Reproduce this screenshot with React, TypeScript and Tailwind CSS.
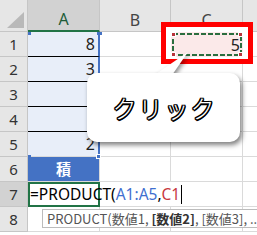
const jp = "font-['Noto_Sans','Noto_Sans_CJK_JP',sans-serif]";

function RowHead({ n, active }: { n: number; active?: boolean }) {
  return (
    <div
      className={`flex items-center justify-center border-r border-b border-[#c6c6c6] text-[15px] text-[#333] ${
        active ? "bg-[#d2d2d2]" : "bg-[#e6e6e6]"
      }`}
    >
      {n}
    </div>
  );
}

function Cell({ className = "", children }: { className?: string; children?: React.ReactNode }) {
  return <div className={`flex items-center justify-end pr-[3px] text-[16px] ${className}`}>{children}</div>;
}

const g = "border-r border-b border-[#dadada]";

export default function App() {
  const rows = [1, 2, 3, 4, 5];
  const values: Record<number, string> = { 1: "8", 2: "3", 5: "2" };

  return (
    <div className={`relative h-[235px] w-[257px] overflow-hidden bg-white text-[#222] ${jp}`}>
      <div className="grid grid-cols-[28px_72px_71px_72px_1fr] grid-rows-[32px_repeat(8,25px)]">
        {/* header */}
        <div className="relative border-r border-b border-[#c6c6c6] bg-[#e6e6e6]">
          <svg className="absolute left-0 top-0" width="28" height="32">
            <polygon points="24,12 24,28 7,28" fill="#b9b9b9" />
          </svg>
        </div>
        <div className="flex items-center justify-center border-r border-b-2 border-r-[#c6c6c6] border-b-[#217346] bg-[#d2d2d2] pt-[8px] text-[16px] text-[#1d5c38]">
          A
        </div>
        <div className="flex items-center justify-center border-r border-b border-[#c6c6c6] bg-[#e6e6e6] pt-[8px] text-[16px] text-[#444]">
          B
        </div>
        <div className="flex items-center justify-center border-r border-b border-[#c6c6c6] bg-[#e6e6e6] pt-[8px] text-[16px] text-[#444]">
          C
        </div>
        <div className="border-b border-[#c6c6c6] bg-[#e6e6e6]" />

        {rows.map((r) => (
          <div key={r} className="contents">
            <RowHead n={r} />
            <Cell
              className={`border-r-2 border-r-[#4472c4] bg-[#e8eef9] ${
                r < 5 ? "border-b border-b-black" : "border-b border-b-[#dadada]"
              }`}
            >
              {values[r]}
            </Cell>
            <div className={g} />
            <div className={g} />
            <div className="border-b border-[#dadada]" />
          </div>
        ))}

        {/* row 6 */}
        <RowHead n={6} />
        <div className="flex items-center justify-center border-r border-b border-[#dadada] bg-[#4472c4] font-['Noto_Sans_CJK_JP',sans-serif] text-[15px] font-bold text-white">
          積
        </div>
        <div className={g} />
        <div className={g} />
        <div className="border-b border-[#dadada]" />

        {/* row 7 */}
        <RowHead n={7} active />
        <div className="border-2 border-[#217346]" />
        <div className="border-b border-[#dadada]" />
        <div className={g} />
        <div className="border-b border-[#dadada]" />

        {/* row 8 */}
        <RowHead n={8} />
        <div className={g} />
        <div className={g} />
        <div className={g} />
        <div className="border-b border-[#dadada]" />
      </div>

      {/* range handles A1:A5 */}
      <div className="absolute left-[28px] top-[32px] h-[3px] w-[3px] bg-[#4472c4]" />
      <div className="absolute left-[97px] top-[32px] h-[3px] w-[5px] bg-[#4472c4]" />
      <div className="absolute left-[28px] top-[155px] h-[3px] w-[3px] bg-[#4472c4]" />
      <div className="absolute left-[96px] top-[154px] h-[5px] w-[5px] border border-white bg-[#4472c4]" />

      {/* formula being edited */}
      <div className="absolute left-[30px] top-[182px] flex h-[25px] items-center whitespace-nowrap font-['Noto_Sans',sans-serif] text-[15.5px] leading-none">
        <span className="text-black">=PRODUCT(</span>
        <span className="text-[#3f6fd0]">A1:A5</span>
        <span className="text-black">,</span>
        <span className="text-[#c8393f]">C1</span>
        <span className="ml-[1px] h-[19px] w-[1px] bg-black" />
      </div>

      {/* argument tooltip */}
      <div className="absolute left-[42px] top-[209px] flex h-[19px] items-center whitespace-pre border border-[#bcbcbc] bg-white pl-[4px] pr-[8px] font-['Noto_Sans_CJK_JP',sans-serif] text-[13px] leading-none text-[#555]">
        {"PRODUCT(数値1, "}
        <span className="font-bold text-[#333]">[数値2]</span>
        {", [数値3], ..."}
      </div>

      {/* red annotation box around C1 */}
      <div className="absolute left-[161px] top-[22px] h-[42px] w-[92px] border-[5px] border-[#ff0000] bg-white">
        <div className="relative ml-[5px] mt-[5px] flex h-[25px] w-[72px] items-center justify-end bg-[#fbe9e9] pr-[3px] text-[16px]">
          <svg className="absolute left-0 top-0" width="72" height="25">
            <rect x="2" y="2" width="68" height="21" fill="none" stroke="#2a6e3f" strokeWidth="2" strokeDasharray="5 2" />
            <rect x="0.5" y="0.5" width="4" height="4" fill="#b8333b" stroke="white" strokeWidth="1" />
            <rect x="67.5" y="0.5" width="4" height="4" fill="#b8333b" stroke="white" strokeWidth="1" />
            <rect x="0.5" y="20.5" width="4" height="4" fill="#b8333b" stroke="white" strokeWidth="1" />
            <rect x="67.5" y="20.5" width="4" height="4" fill="#b8333b" stroke="white" strokeWidth="1" />
          </svg>
          <span className="relative">5</span>
        </div>
      </div>

      {/* callout */}
      <svg className="absolute left-[140px] top-[48px] drop-shadow-[2px_2px_2px_rgba(0,0,0,0.45)]" width="60" height="32">
        <polygon points="10,30 30,30 48,4" fill="white" />
      </svg>
      <div className="absolute left-[87px] top-[73px] flex h-[69px] w-[153px] items-center justify-center rounded-[10px] bg-white shadow-[2px_3px_5px_rgba(0,0,0,0.5)]">
        <span className="pl-[2px] font-['Noto_Sans_CJK_JP',sans-serif] text-[24px] font-light tracking-[2px] text-white [text-shadow:1.5px_0_0_#000,-1.5px_0_0_#000,0_1.5px_0_#000,0_-1.5px_0_#000,1.2px_1.2px_0_#000,-1.2px_1.2px_0_#000,1.2px_-1.2px_0_#000,-1.2px_-1.2px_0_#000]">
          クリック
        </span>
      </div>
    </div>
  );
}
